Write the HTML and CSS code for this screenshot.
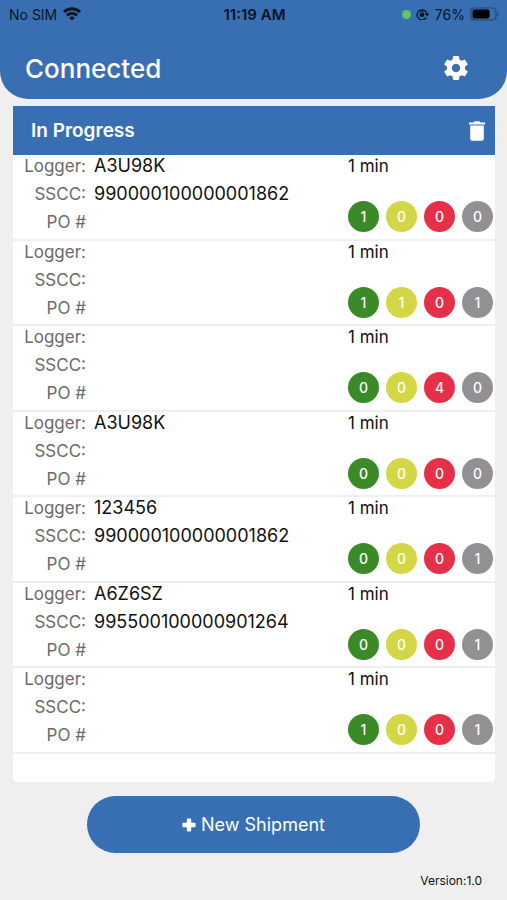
FILE: index.html
```html
<!DOCTYPE html>
<html lang="en">
<head>
<meta charset="utf-8">
<meta name="viewport" content="width=device-width, initial-scale=1">
<title>Shipments</title>
<link rel="stylesheet" href="styles.css">
</head>
<body>
<header class="top">
  <div class="status">
    <div class="status-left">
      <span>No SIM</span>
      <svg class="wifi" viewBox="0 0 18 14" aria-hidden="true"><g fill="none" stroke="#0b1422" stroke-width="2.8"><path d="M.9 5.1a11.5 11.5 0 0 1 16.2 0"/><path d="M4 8.5a7.1 7.1 0 0 1 10 0"/></g><path d="M9 13.6 6.2 10.8a4 4 0 0 1 5.6 0z" fill="#0b1422"/></svg>
    </div>
    <strong class="clock">11:19 AM</strong>
    <div class="status-right">
      <span class="dot"></span>
      <svg class="lock" viewBox="0 0 14 12" aria-hidden="true"><path d="M10.2 9.7A5 5 0 1 1 11 6" fill="none" stroke="#0b1422" stroke-width="1.3"/><path d="M8.8 5.6h4.6L11.1 8.4z" fill="#0b1422"/><rect x="3.7" y="5.3" width="4.600" height="3.4" rx=".5" fill="#0b1422"/><path d="M4.7 5.5V4.4a1.3 1.3 0 0 1 2.6 0v1.1" fill="none" stroke="#0b1422"/></svg>
      <span>76%</span>
      <svg class="battery" viewBox="0 0 30 14" aria-hidden="true"><rect x="1" y="1" width="25" height="12" rx="3.5" fill="none" stroke="#25466f" stroke-width="1.2"/><rect x="2.6" y="2.6" width="17" height="8.8" rx="2" fill="#000"/><path d="M27.5 4.7a2.6 2.6 0 0 1 0 4.6z" fill="#25466f"/></svg>
    </div>
  </div>
  <div class="title-bar">
    <h1>Connected</h1>
    <button class="icon-button" type="button" aria-label="Settings">
      <svg class="gear" viewBox="2 2 20 20" aria-hidden="true"><path fill="#fff" d="M19.43 12.98c.04-.32.07-.64.07-.98s-.03-.66-.07-.98l2.11-1.65c.19-.15.24-.42.12-.64l-2-3.46c-.12-.22-.39-.3-.61-.22l-2.49 1c-.52-.4-1.08-.73-1.69-.98l-.38-2.65A.49.49 0 0 0 14 2h-4c-.25 0-.46.18-.49.42l-.38 2.65c-.61.25-1.17.59-1.69.98l-2.49-1c-.23-.09-.49 0-.61.22l-2 3.46c-.13.22-.07.49.12.64l2.11 1.65c-.04.32-.07.65-.07.98s.03.66.07.98l-2.11 1.65c-.19.15-.24.42-.12.64l2 3.46c.12.22.39.3.61.22l2.49-1c.52.4 1.08.73 1.69.98l.38 2.65c.03.24.24.42.49.42h4c.25 0 .46-.18.49-.42l.38-2.65c.61-.25 1.17-.59 1.69-.98l2.49 1c.23.09.49 0 .61-.22l2-3.46c.12-.22.07-.49-.12-.64zM12 15.5a3.5 3.5 0 1 1 0-7 3.5 3.5 0 0 1 0 7z"/></svg>
    </button>
  </div>
</header>
<main class="card">
  <div class="card-head">
    <h2>In Progress</h2>
    <button class="icon-button" type="button" aria-label="Delete">
      <svg class="trash" viewBox="0 0 16 20" aria-hidden="true"><path fill="#fff" d="M0 1.4h4.6L5.6.2h4.8l1 1.2H16v2H0zM1.2 4.6h13.6v13.2a2 2 0 0 1-2 2H3.2a2 2 0 0 1-2-2z"/></svg>
    </button>
  </div>
  <ul class="list">
    <li class="row">
      <dl><dt>Logger:</dt><dd>A3U98K</dd><dt>SSCC:</dt><dd>990000100000001862</dd><dt>PO #</dt><dd></dd></dl>
      <div class="side"><span>1 min</span><div class="counts"><span class="green">1</span><span class="yellow">0</span><span class="red">0</span><span class="gray">0</span></div></div>
    </li>
    <li class="row">
      <dl><dt>Logger:</dt><dd></dd><dt>SSCC:</dt><dd></dd><dt>PO #</dt><dd></dd></dl>
      <div class="side"><span>1 min</span><div class="counts"><span class="green">1</span><span class="yellow">1</span><span class="red">0</span><span class="gray">1</span></div></div>
    </li>
    <li class="row">
      <dl><dt>Logger:</dt><dd></dd><dt>SSCC:</dt><dd></dd><dt>PO #</dt><dd></dd></dl>
      <div class="side"><span>1 min</span><div class="counts"><span class="green">0</span><span class="yellow">0</span><span class="red">4</span><span class="gray">0</span></div></div>
    </li>
    <li class="row">
      <dl><dt>Logger:</dt><dd>A3U98K</dd><dt>SSCC:</dt><dd></dd><dt>PO #</dt><dd></dd></dl>
      <div class="side"><span>1 min</span><div class="counts"><span class="green">0</span><span class="yellow">0</span><span class="red">0</span><span class="gray">0</span></div></div>
    </li>
    <li class="row">
      <dl><dt>Logger:</dt><dd>123456</dd><dt>SSCC:</dt><dd>990000100000001862</dd><dt>PO #</dt><dd></dd></dl>
      <div class="side"><span>1 min</span><div class="counts"><span class="green">0</span><span class="yellow">0</span><span class="red">0</span><span class="gray">1</span></div></div>
    </li>
    <li class="row">
      <dl><dt>Logger:</dt><dd>A6Z6SZ</dd><dt>SSCC:</dt><dd>995500100000901264</dd><dt>PO #</dt><dd></dd></dl>
      <div class="side"><span>1 min</span><div class="counts"><span class="green">0</span><span class="yellow">0</span><span class="red">0</span><span class="gray">1</span></div></div>
    </li>
    <li class="row">
      <dl><dt>Logger:</dt><dd></dd><dt>SSCC:</dt><dd></dd><dt>PO #</dt><dd></dd></dl>
      <div class="side"><span>1 min</span><div class="counts"><span class="green">1</span><span class="yellow">0</span><span class="red">0</span><span class="gray">1</span></div></div>
    </li>
  </ul>
</main>
<footer class="footer">
  <button class="new" type="button">
    <svg class="plus" viewBox="0 0 14 14" aria-hidden="true"><path fill="#fff" d="M5.6.4h2.8q.8 0 .8.8v3.6h3.6q.8 0 .8.8v2.8q0 .8-.8.8H9.2v3.6q0 .8-.8.8H5.6q-.8 0-.8-.8V9.2H1.2q-.8 0-.8-.8V5.6q0-.8.8-.8h3.6V1.2q0-.8.8-.8z"/></svg>
    <span>New Shipment</span>
  </button>
  <p class="version">Version:1.0</p>
</footer>
</body>
</html>
```
FILE: styles.css
```css
* { box-sizing: border-box; }

body {
  margin: 0;
  min-height: 100vh;
  display: flex;
  flex-direction: column;
  background: #efefef;
  color: #111;
  font-family: Inter, "Liberation Sans", sans-serif;
  font-size: 17px;
}

h1, h2, p, ul, dl, dd { margin: 0; padding: 0; }

button {
  border: 0;
  padding: 0;
  font: inherit;
  color: #fff;
  cursor: pointer;
}

svg { display: block; }

.top {
  height: 99px;
  background: #386fb3;
  border-radius: 0 0 28px 28px;
  color: #fff;
}

.status {
  display: grid;
  grid-template-columns: 1fr auto 1fr;
  align-items: center;
  height: 28px;
  padding: 0 7px 0 9px;
  color: #0b1422;
  font-size: 14px;
}

.status-left, .status-right {
  display: flex;
  align-items: center;
  gap: 6px;
}

.status-right { justify-content: flex-end; gap: 5px; }

.clock { font-size: 15px; font-weight: 600; }
.wifi { width: 18px; height: 14px; }
.dot { width: 9px; height: 9px; border-radius: 50%; background: #62c466; }
.lock { width: 14px; height: 12px; }
.battery { width: 30px; height: 14px; }

.title-bar {
  display: flex;
  align-items: center;
  justify-content: space-between;
  height: 80px;
  padding: 0 39px 0 25px;
}

h1 { font-size: 26px; font-weight: 500; }
.icon-button { background: none; }
.gear { width: 24px; height: 24px; }

.card {
  flex: 1;
  display: flex;
  flex-direction: column;
  margin: 7px 12px 0 13px;
  padding-bottom: 28px;
  background: #fff;
  border-radius: 0 0 4px 4px;
}

.card-head {
  display: flex;
  align-items: center;
  justify-content: space-between;
  height: 49px;
  padding: 0 10px 0 18px;
  background: #386fb3;
  color: #fff;
}

h2 { font-size: 19px; font-weight: 600; }
.trash { width: 16px; height: 20px; }

.list {
  flex: 1;
  display: grid;
  grid-auto-rows: 1fr;
  list-style: none;
}

.row {
  display: flex;
  justify-content: space-between;
  padding-right: 2px;
  border-bottom: 2px solid #efefef;
  line-height: 22px;
}

dl {
  display: grid;
  grid-template-columns: 73px auto;
  grid-auto-rows: 22px;
  gap: 6px 8px;
}

dt { text-align: right; color: #6b6b6b; }
dd { font-size: 18px; }

.side {
  display: flex;
  flex-direction: column;
  gap: 24px;
}

.counts { display: flex; gap: 7px; }

.counts span {
  width: 31px;
  height: 31px;
  border-radius: 50%;
  color: #fff;
  font-size: 14px;
  font-weight: 500;
  line-height: 31px;
  text-align: center;
}

.counts .green { background: #3b8a28; }
.counts .yellow { background: #d3d645; }
.counts .red { background: #e63049; }
.counts .gray { background: #929092; }

.footer {
  display: flex;
  flex-direction: column;
  align-items: center;
  padding: 14px 25px 9px;
}

.new {
  display: flex;
  align-items: center;
  justify-content: center;
  gap: 5px;
  width: 73%;
  height: 57px;
  border-radius: 29px;
  background: #386fb3;
  font-size: 18px;
}

.plus { width: 14px; height: 14px; }

.version {
  align-self: flex-end;
  margin-top: 18px;
  font-size: 12px;
  line-height: 20px;
}
```
